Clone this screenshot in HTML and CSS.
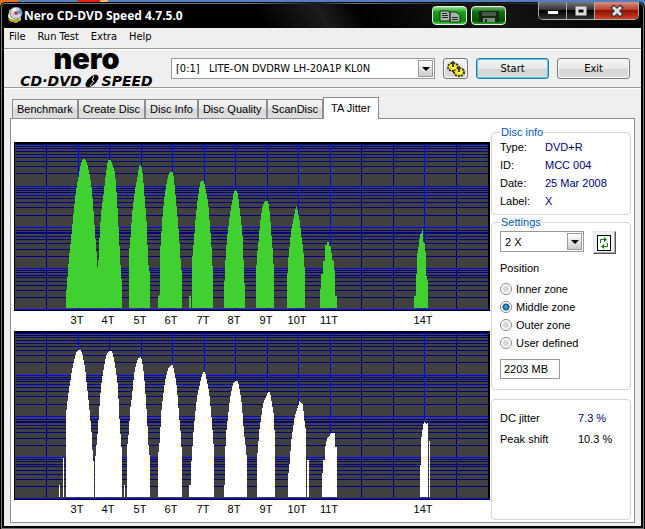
FILE: index.html
```html
<!DOCTYPE html>
<html lang="en">
<head>
  <meta charset="UTF-8" />
  <meta name="viewport" content="width=device-width, initial-scale=1.0"/>
  <title>Nero CD-DVD Speed 4.7.5.0</title>
  <link rel="stylesheet" href="styles.css">
</head>
<body>
  <div class="window">
    <header class="titlebar">
      <svg class="app-icon" width="16" height="16" viewBox="0 0 16 16">
        <path d="M2 3 L8 1 L14 5 L14 13 L9 16 L2 14 Z" fill="#d8c858"/>
        <circle cx="7" cy="9" r="6" fill="#efe9a8"/>
        <circle cx="9" cy="6" r="6" fill="#c8d4e4" stroke="#7088a8"/>
        <path d="M9 6 L4 3 A6 6 0 0 1 9 1 Z" fill="#fff"/>
        <path d="M9 6 L13 2 A6 6 0 0 1 14 7 Z" fill="#4d9bdc"/>
        <circle cx="9" cy="6" r="2" fill="#d84030"/>
        <path d="M2 12 Q7 16 12 12" fill="none" stroke="#b09a20" stroke-width="2"/>
      </svg>
      <h1>Nero CD-DVD Speed 4.7.5.0</h1>
      <div class="title-tools">
        <button class="green" aria-label="Copy">
          <svg width="22" height="14" viewBox="0 0 22 14">
            <path d="M1 2 H9 L11 3 V12 H1 Z M11 3 H17 L21 6 V13 H11 Z" fill="#a8b8a8" stroke="#202820"/>
            <path d="M3 4.500 H8 M3 6.500 H9 M3 8.500 H9 M13 8.500 H19 M13 10.500 H19" stroke="#202820"/>
          </svg>
        </button>
        <button class="green dark" aria-label="Save">
          <svg width="22" height="14" viewBox="0 0 22 14">
            <path d="M1 2 H21 V13 H1 Z" fill="#142a14"/>
            <path d="M4 3 H18 V7 H4 Z" fill="#4a5a4a"/>
            <path d="M5 9 H17 V13 H5 Z" fill="#7c8c7c"/>
            <path d="M7 10 H9 V13 H7 Z" fill="#142a14"/>
          </svg>
        </button>
      </div>
      <div class="window-buttons">
        <button aria-label="Minimize"><svg width="12" height="10"><path d="M1 5 H11 V8 H1 Z" fill="#fff"/></svg></button>
        <button aria-label="Maximize"><svg width="12" height="10"><path d="M2 2 H10 V8 H2 Z" fill="none" stroke="#ddd" stroke-width="3"/></svg></button>
        <button class="close" aria-label="Close"><svg width="14" height="12"><path d="M2 1 L12 11 M12 1 L2 11" stroke="#333" stroke-width="5"/><path d="M3 2 L11 10 M11 2 L3 10" stroke="#ddd" stroke-width="3"/></svg></button>
      </div>
    </header>

    <nav class="menu">
      <a href="#file">File</a>
      <a href="#run">Run Test</a>
      <a href="#extra">Extra</a>
      <a href="#help">Help</a>
    </nav>

    <div class="toolbar">
      <div class="logo">
        <span class="logo-nero">nero</span>
        <span class="logo-speed">CD·DVD
          <svg width="16" height="14" viewBox="0 0 16 14">
            <ellipse cx="8" cy="7" rx="8" ry="4" transform="rotate(-42 8 7)" fill="#000"/>
            <path d="M10 2 L8 6 L10 7 L6 12" fill="none" stroke="#eee"/>
          </svg>
          SPEED</span>
      </div>
      <div class="combo drive">
        <select aria-label="Drive">
          <option>[0:1] &nbsp; LITE-ON DVDRW LH-20A1P KL0N</option>
        </select>
        <span class="arrow"></span>
      </div>
      <button class="btn tool" aria-label="Options">
        <svg width="18" height="18" viewBox="0 0 18 18">
          <g fill="#e8d818" stroke="#302c00">
            <ellipse cx="6" cy="7" rx="5" ry="4" stroke-width="2" stroke-dasharray="2 1"/>
            <ellipse cx="12" cy="12" rx="5" ry="4" stroke-width="2" stroke-dasharray="2 1"/>
          </g>
          <ellipse cx="6" cy="7" rx="4" ry="3" fill="#f8e818"/>
          <ellipse cx="12" cy="12" rx="4" ry="3" fill="#f8e818"/>
          <path d="M5 1 H7 V7 H5 Z M11 6 H13 V12 H11 Z" fill="#444"/>
          <path d="M5 7 H8 V8 H5 Z M11 12 H14 V13 H11 Z" fill="#fff"/>
        </svg>
      </button>
      <button class="btn default">Start</button>
      <button class="btn">Exit</button>
    </div>

    <main>
      <div class="tabs">
        <button>Benchmark</button>
        <button>Create Disc</button>
        <button>Disc Info</button>
        <button>Disc Quality</button>
        <button>ScanDisc</button>
        <button class="active">TA Jitter</button>
      </div>

      <div class="panel">
        <div class="charts">
          <!-- Pits -->
          <svg viewBox="0 0 476 189">
            <defs>
              <g id="grid">
                <rect width="476" height="169" fill="#000"/>
                <rect x="1" y="2" width="473" height="166" fill="#404040"/>
                <g fill="none" transform="translate(0.5 0.5)">
                  <path stroke="#000080" d="M1 4H474M1 6H474M1 9H474M1 12H474M1 15H474M1 19H474M1 24H474M1 31H474
                    M1 46H474M1 48H474M1 50H474M1 56H474M1 60H474M1 65H474M1 73H474
                    M1 88H474M1 90H474M1 91H474M1 94H474M1 97H474M1 101H474M1 107H474M1 114H474
                    M1 128H474M1 130H474M1 133H474M1 135H474M1 139H474M1 143H474M1 148H474M1 155H474
                    M32 2V168M347 2V168M379 2V168M442 2V168"/>
                  <path stroke="#0000c0" d="M1 2H474M1 53H474M95 2V168M127 2V168M221 2V168M253 2V168"/>
                  <path stroke="#0000ff" d="M1 44H474M1 85H474M1 126H474M1 167H474
                    M64 2V168M158 2V168M190 2V168M284 2V168M316 2V168M410 2V168"/>
                </g>
              </g>
              <g id="labels">
                <text x="63" y="182">3T</text>
                <text x="94" y="182">4T</text>
                <text x="126" y="182">5T</text>
                <text x="157" y="182">6T</text>
                <text x="189" y="182">7T</text>
                <text x="220" y="182">8T</text>
                <text x="252" y="182">9T</text>
                <text x="283" y="182">10T</text>
                <text x="315" y="182">11T</text>
                <text x="409" y="182">14T</text>
              </g>
            </defs>
            <use href="#grid"/>
            <g class="pits">
              <polygon points="52,166 52,154 53,142 55,116 57,97 60,67 62,49 65,32 67,21 69,17 71,17 73,21 76,34 78,49 80,76 82,104 83,116 84,134 85,104 87,72 90,49 92,31 94,18 97,18 101,31 103,56 105,94 107,132 108,142 108,166"/>
              <polygon points="115,166 115,112 117,90 118,72 121,48 124,32 125,24 127,22 129,34 131,60 133,85 134,120 136,132 136,166"/>
              <polygon points="144,166 144,154 146,153 146,112 148,81 150,58 152,45 154,34 156,30 159,30 160,38 162,58 164,80 166,108 167,125 168,131 168,166"/>
              <polygon points="175,166 175,154 177,154 177,166"/>
              <polygon points="178,166 178,120 180,97 182,72 184,55 186,42 187,39 190,39 192,50 194,59 196,84 198,112 199,135 199,166"/>
              <polygon points="210,166 210,154 211,125 213,96 215,80 217,66 219,55 220,49 222,48 224,52 226,70 228,87 229,100 230,134 231,147 231,166"/>
              <polygon points="242,166 242,132 243,114 245,95 246,82 248,67 250,60 251,59 254,59 256,72 257,87 258,100 259,112 260,132 260,166"/>
              <polygon points="273,166 273,142 274,120 276,100 277,90 279,80 281,70 282,65 283,65 284,71 286,80 287,92 289,105 290,117 291,132 291,166"/>
              <polygon points="306,166 306,147 307,147 307,132 309,132 309,119 311,119 311,103 313,103 313,100 315,100 315,104 317,104 318,117 320,120 321,135 321,154 323,154 323,166"/>
              <polygon points="400,166 400,154 402,154 402,132 403,132 403,114 405,102 406,93 408,90 408,88 409,88 409,99 411,102 411,110 412,110 412,129 413,138 414,138 414,166"/>
            </g>
            <use href="#labels"/>
          </svg>
          <!-- Lands -->
          <svg viewBox="0 0 476 189">
            <use href="#grid"/>
            <g class="lands">
              <polygon points="45,166 45,154 46,154 46,166"/>
              <polygon points="49,166 49,127 50,127 50,166"/>
              <polygon points="52,166 52,84 54,66 56,52 58,39 60,30 62,22 64,19 67,19 69,26 71,36 73,56 75,73 77,95 78,107 79,130 80,131 80,166"/>
              <polygon points="81,166 81,131 82,119 83,110 85,82 87,55 89,42 91,30 93,22 95,20 98,20 100,28 102,40 104,56 105,80 107,111 108,120 108,166"/>
              <polygon points="110,166 110,154 111,154 111,166"/>
              <polygon points="113,166 113,118 115,100 116,80 118,65 120,44 122,34 124,27 127,26 129,35 131,55 133,85 135,124 136,125 136,166"/>
              <polygon points="144,166 144,125 146,108 147,84 149,66 151,50 153,42 155,36 157,34 159,34 161,44 163,57 165,83 167,105 168,126 168,166"/>
              <polygon points="175,166 175,154 177,154 177,138 179,107 181,85 183,67 185,57 187,48 189,41 191,41 193,50 195,60 197,80 198,92 200,120 200,166"/>
              <polygon points="210,166 210,154 211,154 211,127 212,104 214,85 216,68 218,57 220,51 222,50 224,50 226,60 228,75 229,88 230,102 232,118 233,129 233,166"/>
              <polygon points="243,166 243,127 244,118 245,102 247,88 249,73 252,66 254,61 256,61 258,73 260,85 260,94 261,104 261,166"/>
              <polygon points="274,166 274,147 276,129 277,112 279,97 281,84 283,79 285,72 286,69 287,72 289,74 290,86 292,101 292,166"/>
              <polygon points="293,166 293,129 295,129 295,166"/>
              <polygon points="308,166 308,142 309,142 309,129 311,129 311,118 313,107 315,106 317,102 321,102 321,116 323,116 323,166"/>
              <polygon points="406,166 406,134 407,134 407,110 409,96 410,91 411,91 412,93 414,92 414,166"/>
              <polygon points="415,166 415,110 416,110 416,166"/>
            </g>
            <use href="#labels"/>
          </svg>
        </div>

        <div class="side">
          <fieldset class="info">
            <legend>Disc info</legend>
            <dl>
              <dt>Type:</dt><dd>DVD+R</dd>
              <dt>ID:</dt><dd>MCC 004</dd>
              <dt>Date:</dt><dd>25 Mar 2008</dd>
              <dt>Label:</dt><dd>X</dd>
            </dl>
          </fieldset>

          <fieldset class="settings">
            <legend>Settings</legend>
            <div class="speed">
              <div class="combo">
                <select aria-label="Speed">
                  <option>2 X</option>
                </select>
                <span class="arrow"></span>
              </div>
              <button class="refresh" aria-label="Refresh">
                <svg width="14" height="16" viewBox="0 0 14 16">
                  <rect x="0.500" y="0.500" width="13" height="15" fill="#fff" stroke="#000"/>
                  <path d="M3.500 8 V4.500 H8 M10.500 8 V11.500 H6" fill="none" stroke="#008000"/>
                  <path d="M7 2 L10 4.500 L7 7 Z M7 9 L4 11.500 L7 14 Z" fill="#008000"/>
                </svg>
              </button>
            </div>
            <p>Position</p>
            <label><input type="radio" name="zone">Inner zone</label>
            <label><input type="radio" name="zone" checked>Middle zone</label>
            <label><input type="radio" name="zone">Outer zone</label>
            <label><input type="radio" name="zone">User defined</label>
            <input type="text" class="size" aria-label="Size" value="2203 MB">
          </fieldset>

          <div class="results">
            <dl>
              <dt>DC jitter</dt><dd class="blue">7.3 %</dd>
              <dt>Peak shift</dt><dd>10.3 %</dd>
            </dl>
          </div>
        </div>
      </div>
    </main>
  </div>
</body>
</html>
```
FILE: styles.css
```css
* {
  box-sizing: border-box;
}

body {
  margin: 0;
  padding-top: 2px;
  background: linear-gradient(90deg, #f07018 0 18px, #5080c0 18px 78px, #e82010 78px 100px, #e8c060 100px 108px, #5080c0 108px);
  font-family: "Liberation Sans", Arial, sans-serif;
  font-size: 11px;
  line-height: 14px;
  color: #000;
}

button, input, select {
  font: inherit;
  color: inherit;
}

.window {
  display: flex;
  flex-direction: column;
  min-height: calc(100vh - 2px);
  padding: 0 4px 4px;
  background: #000;
  border-radius: 6px 6px 0 0;
  box-shadow: inset 0 0 0 1px #000, inset 0 0 0 2px #777;
}

/* Title bar */
.titlebar {
  display: flex;
  align-items: flex-start;
  height: 26px;
  padding-left: 3px;
  background: linear-gradient(60deg, transparent 40%, #1c1c1c 50%, transparent 56%, #161616 75%, transparent);
}

.app-icon {
  margin-top: 5px;
}

.titlebar h1 {
  flex: 1;
  margin: 5px 0 0 1px;
  font-family: "Open Sans", "Noto Sans", sans-serif;
  font-size: 12px;
  line-height: 18px;
  color: #fff;
}

.title-tools {
  display: flex;
  gap: 4px;
  margin: 4px 32px 0 0;
}

.green {
  width: 35px;
  height: 19px;
  padding: 1px 0 0;
  border: 1px solid #e8f4e8;
  border-radius: 4px;
  background: linear-gradient(#9ae09a, #18a018 30%, #088808 80%, #40d040);
}

.green.dark {
  background: linear-gradient(#70b070, #0c700c 30%, #045004 80%, #20a020);
}

.green svg,
.window-buttons svg {
  display: block;
  margin: 0 auto;
}

.window-buttons {
  display: flex;
  width: 101px;
  height: 18px;
  margin-right: 2px;
  border: 1px solid #aaa;
  border-top: 0;
  border-radius: 0 0 5px 5px;
  overflow: hidden;
}

.window-buttons button {
  flex: 1;
  padding: 0;
  border: 0;
  border-right: 1px solid #aaa;
  background: linear-gradient(#777, #333 45%, #000 50%, #333);
}

.window-buttons .close {
  flex: 0 0 43px;
  border-right: 0;
  background: linear-gradient(#d89080, #b84030 45%, #901000 50%, #d04028);
}

/* Menu */
.menu {
  display: flex;
  height: 21px;
  padding: 2px 5px 0;
  gap: 12px;
  border-bottom: 1px solid #999;
  background: #efefef;
}

.menu a {
  color: #000;
  text-decoration: none;
}

.menu,
.toolbar {
  font-family: "DejaVu Sans Condensed", "DejaVu Sans", sans-serif;
}

/* Toolbar */
.toolbar {
  display: flex;
  align-items: center;
  height: 39px;
  padding: 0 11px 0 10px;
  border-top: 1px solid #fff;
  border-bottom: 1px solid #999;
  background: #efefef;
}

.logo {
  display: flex;
  flex-direction: column;
  align-items: center;
  align-self: flex-start;
  width: 145px;
  margin-right: 12px;
  white-space: nowrap;
}

.logo-nero {
  margin-top: -3px;
  font-family: Inter, sans-serif;
  font-size: 29px;
  font-weight: 900;
  line-height: 24px;
}

.logo-speed {
  display: flex;
  align-items: center;
  gap: 2px;
  margin-top: 3px;
  font-family: "DejaVu Sans", sans-serif;
  font-size: 14px;
  font-weight: bold;
  font-style: italic;
  line-height: 14px;
}

.combo {
  position: relative;
  height: 21px;
}

.combo select {
  width: 100%;
  height: 100%;
  padding: 0 4px;
  border: 1px solid #999;
  border-radius: 0;
  background: #fff;
  appearance: none;
}

.arrow {
  position: absolute;
  top: 2px;
  right: 2px;
  bottom: 2px;
  width: 15px;
  border: 1px solid #999;
  background: linear-gradient(#fff, #ccc);
  pointer-events: none;
}

.arrow::after {
  content: "";
  position: absolute;
  left: 3px;
  top: 6px;
  border: 4px solid transparent;
  border-top-color: #000;
  border-bottom: 0;
}

.drive {
  flex: 1;
  margin-right: 8px;
}

.btn {
  width: 73px;
  height: 21px;
  margin-left: 8px;
  padding: 0;
  border: 1px solid #777;
  border-radius: 3px;
  background: linear-gradient(#f6f6f6, #e8e8e8 50%, #d4d4d4 50%, #dcdcdc);
  box-shadow: inset 0 0 0 1px #fafafa;
}

.btn.tool {
  width: 25px;
  margin-left: 0;
}

.btn.tool svg {
  display: block;
  margin: 0 auto;
}

.btn.default {
  border-color: #2878a0;
  box-shadow: inset 0 0 0 1px #50d0f8;
}

/* Tabs */
main {
  flex: 1;
  padding: 8px 6px 3px;
  border-top: 1px solid #fff;
  background: #efefef;
}

.tabs {
  display: flex;
  align-items: flex-end;
  padding-left: 2px;
}

.tabs button {
  height: 19px;
  padding: 0 4px;
  border: 1px solid #8c8c94;
  border-bottom: 0;
  background: linear-gradient(#f4f4f4, #e8e8e8 50%, #d8d8d8 50%, #dedede);
  white-space: nowrap;
}

.tabs .active {
  position: relative;
  height: 22px;
  padding: 0 7px 2px;
  margin-bottom: -1px;
  background: #fff;
}

.panel {
  display: grid;
  grid-template-columns: 1fr 140px;
  gap: 1px;
  padding: 23px 3px 2px;
  border: 1px solid #8c8c98;
  background: #fff;
}

.charts svg {
  display: block;
  width: 100%;
}

.charts polygon {
  shape-rendering: crispEdges;
}

.charts text {
  font-size: 11px;
  text-anchor: middle;
}

.pits {
  fill: #40d030;
}

.lands {
  fill: #fff;
}

/* Right column */
.side {
  display: flex;
  flex-direction: column;
  margin-top: -17px;
}

fieldset {
  margin: 0;
  padding: 0 8px;
  border: 1px solid #d4d4d4;
  border-radius: 4px;
}

legend {
  padding: 0 1px;
  color: #0058c8;
}

.info {
  height: 90px;
}

.settings {
  height: 175px;
}

dl {
  display: grid;
  grid-template-columns: 45px 1fr;
  margin: 0;
  line-height: 18px;
}

dd {
  margin: 0;
}

.info dl {
  margin-top: -1px;
}

.info dd,
.blue {
  color: #000080;
}

.speed {
  display: flex;
  gap: 9px;
  margin-top: 2px;
}

.speed .combo {
  width: 84px;
}

.refresh {
  width: 23px;
  height: 23px;
  padding: 0 0 0 3px;
  border: 1px solid;
  border-color: #e4e4e4 #555 #555 #e4e4e4;
  background: #f0f0f0;
  box-shadow: inset -1px -1px #aaa;
}

.refresh svg {
  display: block;
}

.settings p {
  margin: 7px 0 5px;
}

.settings label {
  display: flex;
  align-items: center;
  gap: 4px;
  height: 18px;
}

input[type="radio"] {
  width: 12px;
  height: 12px;
  margin: 0;
  border: 1px solid #888;
  border-radius: 50%;
  background: radial-gradient(#d8d8d8 35%, #fff 60%);
  appearance: none;
}

input[type="radio"]:checked {
  background: radial-gradient(#30a8e0 15%, #104878 45%, #fff 55%);
}

.size {
  width: 60px;
  height: 20px;
  margin-top: 7px;
  padding: 0 3px;
  border: 1px solid #999;
}

.results {
  flex: 1;
  margin-top: 9px;
  padding: 8px;
  border: 1px solid #d4d4d4;
  border-radius: 4px;
}

.results dl {
  grid-template-columns: 78px 1fr;
  line-height: 21px;
}
```
